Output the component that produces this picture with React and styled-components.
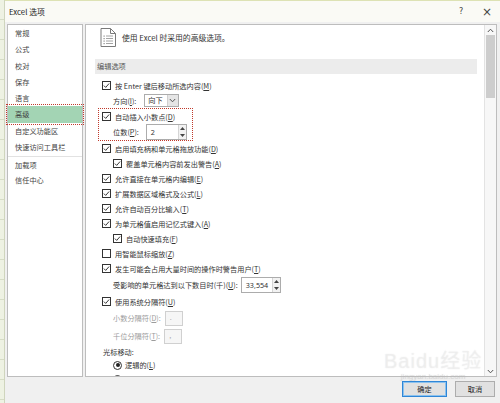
import styled, { createGlobalStyle } from 'styled-components';

const GlobalStyle = createGlobalStyle`
	html, body {
		margin: 0;
		padding: 0;
		background: #f0f0f0;
	}
	* {
		box-sizing: border-box;
	}
`;

const Screen = styled.div`
	position: relative;
	display: flex;
	width: 500px;
	height: 403px;
	overflow: hidden;
	font-family: 'Noto Sans CJK SC', 'Noto Sans', sans-serif;
	font-size: 7.2px;
	color: #333;
`;

const SheetEdge = styled.div`
	width: 5px;
	background: repeating-linear-gradient(
		to bottom,
		#eef2e3 0px,
		#eef2e3 19px,
		#d6dcc6 19px,
		#d6dcc6 20px
	);
	border-right: 1px solid #cfd5bd;
`;

const Dialog = styled.div`
	flex: 1;
	display: flex;
	flex-direction: column;
	background: #f0f0f0;
	border-top: 1px solid #dde2b4;
`;

const TitleBar = styled.div`
	display: flex;
	align-items: center;
	height: 21px;
	padding-left: 4px;
	background: #fafaf5;
	font-size: 7.8px;
	color: #222;
	& > .title {
		flex: 1;
	}
`;

const TitleButton = styled.div`
	width: 26px;
	height: 21px;
	display: flex;
	align-items: center;
	justify-content: center;
	font-size: ${(p) => (p.$big ? '12px' : '8px')};
	color: #444;
	font-family: 'DejaVu Sans', sans-serif;
`;

const Body = styled.div`
	flex: 1;
	display: flex;
	gap: 2px;
	padding: 2px 3px 0 2px;
	min-height: 0;
`;

const Nav = styled.div`
	width: 76px;
	display: flex;
	flex-direction: column;
	background: #fff;
	border: 1px solid #bdbdbd;
`;

const NavItem = styled.div`
	flex-shrink: 0;
	height: 16.25px;
	display: flex;
	align-items: center;
	padding-left: 7px;
	white-space: nowrap;
	color: #444;
	background: ${(p) => (p.$active ? '#a3d4b4' : 'transparent')};
	outline: ${(p) => (p.$active ? '1px dotted #c0392b' : 'none')};
	outline-offset: 1px;
	&.sep {
		border-top: 1px solid #e2e2e2;
		margin-top: 1px;
	}
`;

const Panel = styled.div`
	flex: 1;
	display: flex;
	background: #fff;
	border: 1px solid #bdbdbd;
	overflow: hidden;
`;

const Content = styled.div`
	flex: 1;
	display: flex;
	flex-direction: column;
	padding-right: 7px;
	overflow: hidden;
	& > * {
		flex-shrink: 0;
	}
`;

const Header = styled.div`
	display: flex;
	align-items: flex-start;
	gap: 6px;
	height: 34px;
	padding: 3px 0 0 14px;
	font-size: 7.8px;
	color: #333;
	& > span {
		line-height: 19px;
	}
`;

const Band = styled.div`
	height: 15px;
	line-height: 15px;
	margin: 0 0 4px 9px;
	padding-left: 2px;
	background: #ececec;
	color: #555;
`;

const Row = styled.div`
	display: flex;
	flex-shrink: 0;
	align-items: center;
	gap: ${(p) => p.$gap ?? 4}px;
	height: ${(p) => p.$h ?? 15}px;
	padding-left: ${(p) => p.$pl ?? 16}px;
	white-space: nowrap;
	color: ${(p) => (p.$muted ? '#9c9c9c' : '#333')};
`;

const Marked = styled.div`
	width: 95px;
	height: 33px;
	margin-left: 12px;
	border: 1px dotted #c0392b;
	display: flex;
	flex-direction: column;
`;

const Select = styled.div`
	display: flex;
	height: 13px;
	margin-left: ${(p) => p.$ml}px;
	border: 1px solid #acacac;
	& > span {
		padding: 0 4px 0 3px;
		line-height: 11px;
	}
	& > i {
		width: 11px;
		display: flex;
		align-items: center;
		justify-content: center;
		background: #e5e5e5;
		border-left: 1px solid #cfcfcf;
	}
`;

const Spinner = styled.div`
	display: flex;
	width: ${(p) => p.$w}px;
	height: 16px;
	margin-left: ${(p) => p.$ml}px;
	border: 1px solid #acacac;
	background: #fff;
	& > span {
		flex: 1;
		padding-left: 4px;
		line-height: 14px;
		font-family: 'Noto Sans', sans-serif;
	}
	& > i {
		width: 8px;
		display: flex;
		flex-direction: column;
		justify-content: space-around;
		align-items: center;
		border-left: 1px solid #d5d5d5;
		background: #f2f2f2;
	}
`;

const SepBox = styled.div`
	width: 18px;
	height: 15px;
	margin-left: ${(p) => p.$ml}px;
	border: 1px solid #d0d0d0;
	background: #f6f6f6;
	color: #aaa;
	padding-left: 4px;
	line-height: 11px;
`;

const Radio = styled.div`
	width: 9px;
	height: 9px;
	border-radius: 50%;
	border: 1px solid #333;
	display: flex;
	align-items: center;
	justify-content: center;
	&::after {
		content: '';
		width: 4px;
		height: 4px;
		border-radius: 50%;
		background: ${(p) => (p.$on ? '#222' : 'transparent')};
	}
`;

const Scroll = styled.div`
	width: 12px;
	display: flex;
	flex-direction: column;
	align-items: center;
	background: #f7f7f7;
	border-left: 1px solid #e3e3e3;
	& > .thumb {
		width: 9px;
		height: 63px;
		background: #cdcdcd;
	}
	& > .fill {
		flex: 1;
	}
`;

const Arrow = styled.div`
	height: 10px;
	display: flex;
	align-items: center;
	justify-content: center;
`;

const Footer = styled.div`
	height: 26px;
	display: flex;
	justify-content: flex-end;
	align-items: flex-start;
	gap: 8px;
	padding: 4px 5px 0 0;
`;

const Button = styled.div`
	width: ${(p) => p.$w}px;
	height: 16px;
	display: flex;
	align-items: center;
	justify-content: center;
	background: #e1e1e1;
	border: 1px solid ${(p) => (p.$primary ? '#2f86d7' : '#adadad')};
	box-shadow: ${(p) => (p.$primary ? 'inset 0 0 0 1px #8cc2ee' : 'none')};
	color: #222;
`;

const Watermark = styled.div`
	position: absolute;
	left: 384px;
	top: 345px;
	display: flex;
	flex-direction: column;
	align-items: center;
	pointer-events: none;
	color: rgba(255, 255, 255, 0.35);
	text-shadow: 0 0 1px rgba(160, 160, 160, 0.3);
	font-family: 'Liberation Sans', 'Noto Sans CJK SC', sans-serif;
	& > .big {
		font-size: 20px;
		letter-spacing: 1px;
	}
	& > .small {
		font-size: 8px;
		margin-top: -2px;
		color: rgba(200, 200, 200, 0.35);
	}
`;

function Check({ on = true }) {
	return (
		<svg width='9' height='9' viewBox='0 0 9 9'>
			<rect x='0.5' y='0.5' width='8' height='8' fill='#fff' stroke='#333' />
			{on && (
				<path d='M1.9 4.6 L3.7 6.4 L7.1 2.5' fill='none' stroke='#222' strokeWidth='0.9' />
			)}
		</svg>
	);
}

function DocIcon() {
	return (
		<svg width='16' height='19' viewBox='0 0 16 19'>
			<path d='M1 0.5 H10.5 L15.5 5.5 V18.5 H1 Z' fill='#fff' stroke='#7a7a7a' />
			<path d='M10.5 0.5 V5.5 H15.5' fill='none' stroke='#7a7a7a' />
			{[8, 10.5, 13, 15.5].map((y) => (
				<g key={y}>
					<rect x='3.5' y={y - 0.5} width='1.2' height='1.2' fill='#8a8a8a' />
					<line x1='6' y1={y} x2='13' y2={y} stroke='#9a9a9a' strokeWidth='0.9' />
				</g>
			))}
		</svg>
	);
}

const Tri = ({ up }) => (
	<svg width='5' height='3' viewBox='0 0 5 3'>
		<path d={up ? 'M0 3 L2.5 0 L5 3 Z' : 'M0 0 L2.5 3 L5 0 Z'} fill='#444' />
	</svg>
);

const Chevron = ({ up }) => (
	<svg width='7' height='5' viewBox='0 0 7 5'>
		<path d={up ? 'M0.8 4 L3.5 1.2 L6.2 4' : 'M0.8 1 L3.5 3.8 L6.2 1'} fill='none' stroke='#555' strokeWidth='1' />
	</svg>
);

const navItems = ['常规', '公式', '校对', '保存', '语言', '高级', '自定义功能区', '快速访问工具栏'];

function CheckRow({ label, k, on = true, pl }) {
	return (
		<Row $pl={pl}>
			<Check on={on} />
			<span>
				{label}(<u>{k}</u>)
			</span>
		</Row>
	);
}

export default function App() {
	return (
		<>
			<GlobalStyle />
			<Screen>
				<SheetEdge />
				<Dialog>
					<TitleBar>
						<span className='title'>Excel 选项</span>
						<TitleButton>?</TitleButton>
						<TitleButton $big>×</TitleButton>
					</TitleBar>
					<Body>
						<Nav>
							{navItems.map((item) => (
								<NavItem key={item} $active={item === '高级'}>
									{item}
								</NavItem>
							))}
							<NavItem className='sep'>加载项</NavItem>
							<NavItem>信任中心</NavItem>
						</Nav>
						<Panel>
							<Content>
								<Header>
									<DocIcon />
									<span>使用 Excel 时采用的高级选项。</span>
								</Header>
								<Band>编辑选项</Band>
								<CheckRow label='按 Enter 键后移动所选内容' k='M' />
								<Row $pl={27} $gap={0}>
									<span>
										方向(<u>I</u>):
									</span>
									<Select $ml={8}>
										<span>向下</span>
										<i>
											<Chevron />
										</i>
									</Select>
								</Row>
								<Marked>
									<CheckRow label='自动插入小数点' k='D' pl={3} />
									<Row $pl={14} $gap={0} $h={16}>
										<span>
											位数(<u>P</u>):
										</span>
										<Spinner $w={41} $ml={7}>
											<span>2</span>
											<i>
												<Tri up />
												<Tri />
											</i>
										</Spinner>
									</Row>
								</Marked>
								<CheckRow label='启用填充柄和单元格拖放功能' k='D' />
								<CheckRow label='覆盖单元格内容前发出警告' k='A' pl={27} />
								<CheckRow label='允许直接在单元格内编辑' k='E' />
								<CheckRow label='扩展数据区域格式及公式' k='L' />
								<CheckRow label='允许自动百分比输入' k='T' />
								<CheckRow label='为单元格值启用记忆式键入' k='A' />
								<CheckRow label='自动快速填充' k='F' pl={27} />
								<CheckRow label='用智能鼠标缩放' k='Z' on={false} />
								<CheckRow label='发生可能会占用大量时间的操作时警告用户' k='T' />
								<Row $pl={27} $gap={0} $h={18}>
									<span>
										受影响的单元格达到以下数目时(千)(<u>U</u>):
									</span>
									<Spinner $w={40} $ml={3}>
										<span>33,554</span>
										<i>
											<Tri up />
											<Tri />
										</i>
									</Spinner>
								</Row>
								<CheckRow label='使用系统分隔符' k='U' />
								<Row $pl={27} $gap={0} $h={18} $muted>
									<span>
										小数分隔符(<u>D</u>):
									</span>
									<SepBox $ml={4}>.</SepBox>
								</Row>
								<Row $pl={27} $gap={0} $h={18} $muted>
									<span>
										千位分隔符(<u>T</u>):
									</span>
									<SepBox $ml={4}>,</SepBox>
								</Row>
								<Row $pl={17} $h={13}>
									光标移动:
								</Row>
								<Row $pl={27} $gap={3} $h={14}>
									<Radio $on />
									<span>
										逻辑的(<u>L</u>)
									</span>
								</Row>
								<Row $pl={27} $gap={3}>
									<Radio />
									<span>
										视觉(<u>V</u>)
									</span>
								</Row>
							</Content>
							<Scroll>
								<Arrow>
									<Chevron up />
								</Arrow>
								<div className='thumb' />
								<div className='fill' />
								<Arrow>
									<Chevron />
								</Arrow>
							</Scroll>
						</Panel>
					</Body>
					<Footer>
						<Button $w={45} $primary>
							确定
						</Button>
						<Button $w={40}>取消</Button>
					</Footer>
				</Dialog>
				<Watermark>
					<span className='big'>Baidu经验</span>
					<span className='small'>jingyan.baidu.com</span>
				</Watermark>
			</Screen>
		</>
	);
}
